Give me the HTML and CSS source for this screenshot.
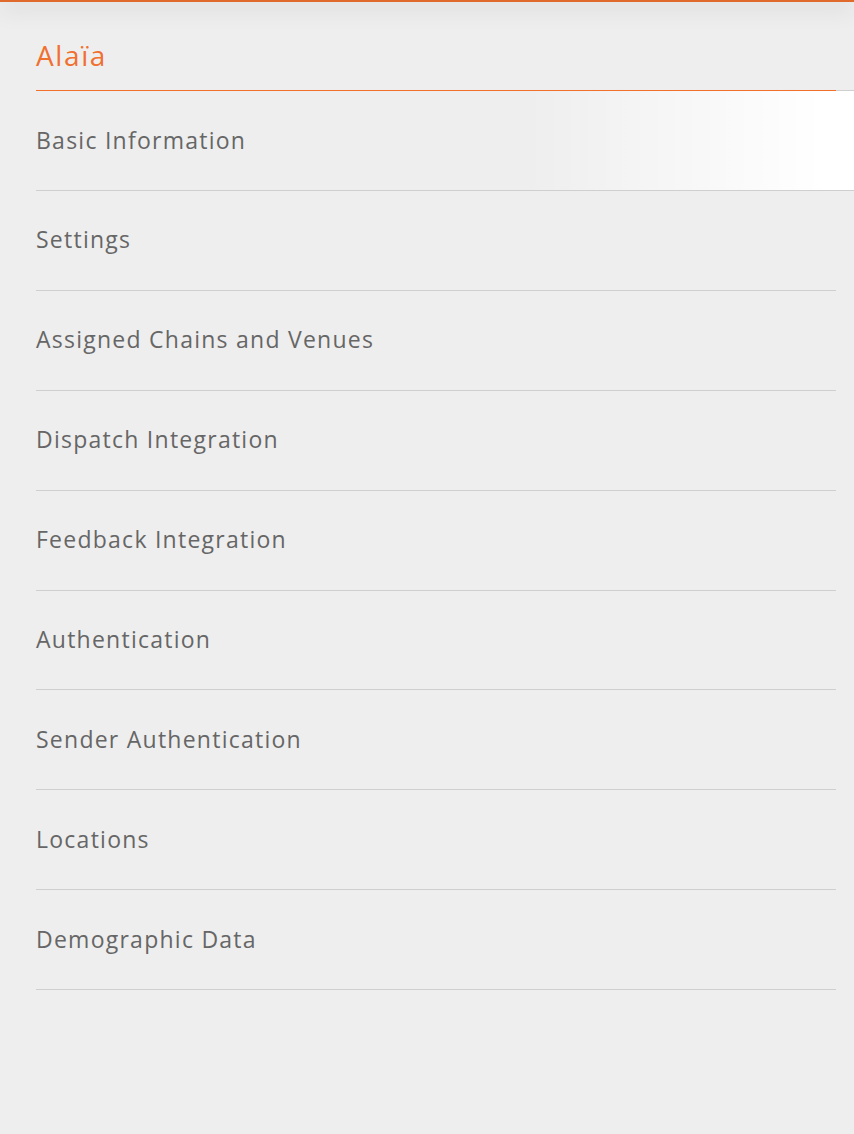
FILE: index.html
```html
<!DOCTYPE html>
<html>
<head>
<meta charset="utf-8">
<link rel="stylesheet" href="styles.css">
</head>
<body>
<div class="topbar"></div>
<div class="panel">
  <h1 class="title">Alaïa</h1>
  <ul class="menu">
    <li class="item active">Basic Information</li>
    <li class="item">Settings</li>
    <li class="item">Assigned Chains and Venues</li>
    <li class="item">Dispatch Integration</li>
    <li class="item">Feedback Integration</li>
    <li class="item">Authentication</li>
    <li class="item">Sender Authentication</li>
    <li class="item">Locations</li>
    <li class="item">Demographic Data</li>
  </ul>
</div>
</body>
</html>
```
FILE: styles.css
```css
html, body {
  margin: 0;
  padding: 0;
  background: #eeeeee;
  height: 100%;
}
body {
  font-family: "Open Sans", "Liberation Sans", sans-serif;
  overflow: hidden;
}
.topbar {
  height: 2px;
  background: #e06a2c;
  box-shadow: 0 4px 22px rgba(0, 0, 0, 0.45);
  position: relative;
  z-index: 2;
}
.panel {
  padding: 0 18px 0 36px;
}
.title {
  margin: 0;
  height: 89px;
  padding-top: 18px;
  display: flex;
  align-items: center;
  font-size: 28px;
  font-weight: 400;
  color: #f07030;
  border-bottom: 1px solid #f36f2c;
  box-sizing: border-box;
  letter-spacing: 1.6px;
}
.menu {
  list-style: none;
  margin: 0;
  padding: 0;
}
.item {
  height: 99.88px;
  padding-bottom: 2px;
  display: flex;
  align-items: center;
  border-bottom: 1px solid #cfcfcf;
  box-sizing: border-box;
  font-size: 23px;
  color: #666666;
  letter-spacing: 1.25px;
}
.item.active {
  position: relative;
  margin-right: -18px;
  height: 100px;
  background: linear-gradient(to right, rgba(255,255,255,0) 0%, rgba(255,255,255,0) 60%, #ffffff 96%);
}
.item.active::before {
  content: "";
  position: absolute;
  top: -1px;
  right: 0;
  width: 18px;
  height: 1px;
  background: #cfcfcf;
}
```
